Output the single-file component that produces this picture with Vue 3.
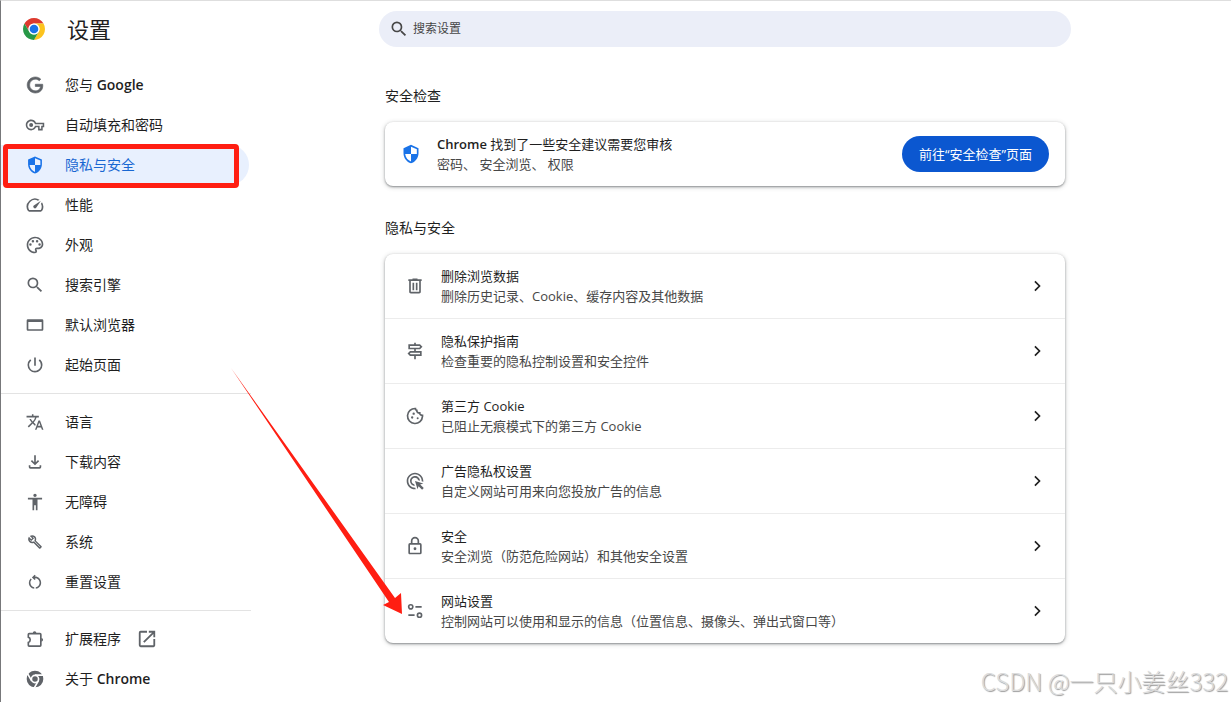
<script setup>
import { ref } from 'vue'

const query = ref('')
const active = ref('privacy')

const searchPath = 'M15.5 14h-.79l-.28-.27A6.471 6.471 0 0 0 16 9.5 6.5 6.5 0 1 0 9.5 16c1.61 0 3.09-.59 4.23-1.57l.27.28v.79l5 4.99L20.49 19l-4.99-5zm-6 0C7.01 14 5 11.99 5 9.5S7.01 5 9.5 5 14 7.01 14 9.5 11.99 14 9.5 14z'
const shieldPath = 'M12 1 3 5v6c0 5.55 3.84 10.74 9 12 5.16-1.26 9-6.45 9-12V5l-9-4zM12 12H5c.53 4.12 3.28 7.79 7 8.94zM12 3.19l7 3.11V12h-7z'

const menu = [
  [
    {
      id: 'google',
      label: '您与 ',
      brand: 'Google',
      box: '-3 -3 30 30',
      bold: true,
      path: 'M12.48 10.92v3.28h7.84c-.24 1.84-.853 3.187-1.787 4.133-1.147 1.147-2.933 2.4-6.053 2.4-4.827 0-8.6-3.893-8.6-8.72s3.773-8.72 8.6-8.72c2.6 0 4.507 1.027 5.907 2.347l2.307-2.307C18.747 1.44 16.133 0 12.48 0 5.867 0 .307 5.387.307 12s5.56 12 12.173 12c3.573 0 6.267-1.173 8.373-3.36 2.16-2.16 2.84-5.213 2.84-7.667 0-.76-.053-1.467-.173-2.053H12.48z'
    },
    {
      id: 'autofill',
      label: '自动填充和密码',
      box: '-1 -1 26 26',
      path: 'M22 19h-6v-4h-2.68c-1.14 2.42-3.6 4-6.32 4-3.86 0-7-3.14-7-7s3.14-7 7-7c2.72 0 5.17 1.58 6.32 4H24v6h-2v4zm-4-2h2v-4h2v-2H11.94l-.23-.67C11.01 8.34 9.11 7 7 7c-2.76 0-5 2.24-5 5s2.24 5 5 5c2.11 0 4.01-1.34 4.71-3.33l.23-.67H18v4zM7 14.6a2.6 2.6 0 1 1 0-5.2 2.6 2.6 0 0 1 0 5.2z'
    },
    { id: 'privacy', label: '隐私与安全', path: shieldPath, box: '-1 -1 26 26' },
    {
      id: 'performance',
      label: '性能',
      path: 'M20.38 8.57l-1.23 1.85a8 8 0 0 1-.22 7.58H5.07A8 8 0 0 1 15.58 6.85l1.85-1.23A10 10 0 0 0 3.35 19a2 2 0 0 0 1.72 1h13.85a2 2 0 0 0 1.74-1 10 10 0 0 0-.27-10.44zM10.59 15.41a2 2 0 0 0 2.83 0l5.66-8.49-8.49 5.66a2 2 0 0 0 0 2.83z'
    },
    {
      id: 'appearance',
      label: '外观',
      path: 'M12 22C6.49 22 2 17.51 2 12S6.49 2 12 2s10 4.04 10 9c0 3.31-2.69 6-6 6h-1.77c-.28 0-.5.22-.5.5 0 .12.05.23.13.33.41.47.64 1.06.64 1.67A2.5 2.5 0 0 1 12 22zm0-18c-4.41 0-8 3.59-8 8s3.59 8 8 8c.28 0 .5-.22.5-.5a.54.54 0 0 0-.14-.35c-.41-.46-.63-1.05-.63-1.65a2.5 2.5 0 0 1 2.5-2.5H16c2.21 0 4-1.79 4-4 0-3.86-3.59-7-8-7zM5 11.5a1.5 1.5 0 1 0 3 0 1.5 1.5 0 1 0-3 0zM8 7.5a1.5 1.5 0 1 0 3 0 1.5 1.5 0 1 0-3 0zM13 7.5a1.5 1.5 0 1 0 3 0 1.5 1.5 0 1 0-3 0zM16 11.5a1.5 1.5 0 1 0 3 0 1.5 1.5 0 1 0-3 0z'
    },
    { id: 'search', label: '搜索引擎', path: searchPath },
    {
      id: 'browser',
      label: '默认浏览器',
      path: 'M3.5 5h17A1.5 1.5 0 0 1 22 6.5v11a1.5 1.5 0 0 1-1.5 1.5h-17A1.5 1.5 0 0 1 2 17.5v-11A1.5 1.5 0 0 1 3.5 5zM4 8.5V17h16V8.5z'
    },
    {
      id: 'startup',
      label: '起始页面',
      path: 'M13 3h-2v10h2V3zm4.83 2.17-1.42 1.42A6.92 6.92 0 0 1 19 12c0 3.87-3.13 7-7 7A6.995 6.995 0 0 1 7.58 6.58L6.17 5.17A8.932 8.932 0 0 0 3 12a9 9 0 0 0 18 0c0-2.74-1.23-5.18-3.17-6.83z'
    }
  ],
  [
    {
      id: 'languages',
      label: '语言',
      box: '-1 -1 26 26',
      path: 'M12.87 15.07l-2.54-2.51.03-.03A17.52 17.52 0 0 0 14.07 6H17V4h-7V2H8v2H1v1.99h11.17C11.5 7.92 10.44 9.75 9 11.35 8.07 10.32 7.3 9.19 6.69 8h-2c.73 1.63 1.73 3.17 2.98 4.56l-5.09 5.02L4 19l5-5 3.11 3.11.76-2.04zM18.5 10h-2L12 22h2l1.12-3h4.75L21 22h2l-4.5-12zm-2.62 7l1.62-4.33L19.12 17h-3.24z'
    },
    {
      id: 'downloads',
      label: '下载内容',
      path: 'M12 16l-5-5 1.4-1.45 2.6 2.6V4h2v8.15l2.6-2.6L17 11zM6.5 20a2 2 0 0 1-2-2v-2h2v2h11v-2h2v2a2 2 0 0 1-2 2z'
    },
    {
      id: 'accessibility',
      label: '无障碍',
      path: 'M12 2c1.1 0 2 .9 2 2s-.9 2-2 2-2-.9-2-2 .9-2 2-2zm8.5 7H15v13h-2v-6h-2v6H9V9H3.5V7h17v2z'
    },
    {
      id: 'system',
      label: '系统',
      box: '-4 -4 32 32',
      path: 'M22.61 18.99l-9.08-9.08c.93-2.34.45-5.1-1.44-7C9.79.61 6.21.4 3.66 2.26L7.5 6.11 6.08 7.52 2.25 3.69C.39 6.23.6 9.82 2.9 12.11c1.86 1.86 4.57 2.35 6.89 1.48l9.11 9.11c.39.39 1.02.39 1.41 0l2.3-2.3c.4-.38.4-1.01 0-1.41zM19.6 20.1l-9.2-9.2c-.61.45-1.09.6-1.8.7-1.36.2-2.6-.1-3.6-1.15C4 9.4 3.5 8.7 3.4 7.8l2.7 2.7 4.4-4.4-2.7-2.7c1.1.1 1.9.5 2.7 1.3 1 1 1.3 2.2 1.1 3.5-.12.71-.4 1.3-.8 1.9l9.4 9.4z'
    },
    {
      id: 'reset',
      label: '重置设置',
      box: '-1 -1 26 26',
      path: 'M6 13c0-1.65.67-3.15 1.76-4.24L6.34 7.34A8.014 8.014 0 0 0 4 13c0 4.08 3.05 7.44 7 7.93v-2.02c-2.83-.48-5-2.94-5-5.91zM20 13c0-4.42-3.58-8-8-8-.06 0-.12.01-.18.01l1.09-1.09L11.5 2.5 8 6l3.5 3.5 1.41-1.41-1.08-1.08c.06 0 .12-.01.17-.01 3.31 0 6 2.69 6 6 0 2.97-2.17 5.43-5 5.91v2.02c3.95-.49 7-3.85 7-7.93z'
    }
  ],
  [
    { id: 'extensions', label: '扩展程序', external: true },
    { id: 'about', label: '关于 ', brand: 'Chrome' }
  ]
]

const rows = [
  {
    title: '删除浏览数据',
    sub: '删除历史记录、Cookie、缓存内容及其他数据',
    path: 'M7 21q-.825 0-1.412-.587Q5 19.825 5 19V6H4V4h5V3h6v1h5v2h-1v13q0 .825-.587 1.413Q17.825 21 17 21zM17 6H7v13h10zM9 17h2V8H9zm4 0h2V8h-2z'
  },
  {
    title: '隐私保护指南',
    sub: '检查重要的隐私控制设置和安全控件',
    path: 'M13 10h5l3-3-3-3h-5V2h-2v2H4v6h7v2H6l-3 3 3 3h5v4h2v-4h7v-6h-7v-2zM6 6h11.17l1 1-1 1H6V6zm12 10H6.83l-1-1 1-1H18v2z'
  },
  {
    title: '第三方 Cookie',
    sub: '已阻止无痕模式下的第三方 Cookie',
    stroke: 'M12.5 3a9 9 0 1 0 8.5 9.5v-1.3c-2.2.1-3.4-1.1-3.3-2.9-2.3.1-3.8-1.2-3.5-3-1.2-.3-1.8-1.2-1.7-2.3z',
    path: 'M9 9.2a1.4 1.4 0 1 0 2.8 0 1.4 1.4 0 1 0-2.8 0zM7.2 13.8a1.4 1.4 0 1 0 2.8 0 1.4 1.4 0 1 0-2.8 0zM14 14.8a1.2 1.2 0 1 0 2.4 0 1.2 1.2 0 1 0-2.4 0z'
  },
  {
    title: '广告隐私权设置',
    sub: '自定义网站可用来向您投放广告的信息',
    path: 'M11.71 17.99A5.993 5.993 0 0 1 6 12c0-3.31 2.69-6 6-6 3.22 0 5.84 2.53 5.99 5.71l-2.1-.63a3.999 3.999 0 1 0-4.81 4.81l.63 2.1zM22 12c0 .3-.01.6-.04.9l-1.97-.59c.01-.1.01-.21.01-.31 0-4.42-3.58-8-8-8s-8 3.58-8 8 3.58 8 8 8c.1 0 .21 0 .31-.01l.59 1.97c-.3.03-.6.04-.9.04-5.52 0-10-4.48-10-10S6.48 2 12 2s10 4.48 10 10zm-3.77 4.26L22 15l-10-3 3 10 1.26-3.77 4.27 4.27 1.98-1.98-4.28-4.26z'
  },
  {
    title: '安全',
    sub: '安全浏览（防范危险网站）和其他安全设置',
    path: 'M18 8.5h-1V6A5 5 0 0 0 7 6v2.5H6a2 2 0 0 0-2 2V20c0 1.1.9 2 2 2h12a2 2 0 0 0 2-2v-9.5a2 2 0 0 0-2-2zM9 6a3 3 0 0 1 6 0v2.5H9V6zm9 14H6v-9.5h12V20zm-6-3a1.7 1.7 0 1 0 0-3.4 1.7 1.7 0 0 0 0 3.4z'
  },
  {
    title: '网站设置',
    sub: '控制网站可以使用和显示的信息（位置信息、摄像头、弹出式窗口等）',
    stroke: 'M4.4 7a2.5 2.5 0 1 0 5 0 2.5 2.5 0 1 0-5 0zM12.5 7H20M4 17h7.5M14.9 17a2.5 2.5 0 1 0 5 0 2.5 2.5 0 1 0-5 0z'
  }
]
</script>

<template>
  <div class="app">
    <aside class="sidebar">
      <header class="brand">
        <svg class="logo" viewBox="0 0 24 24" aria-hidden="true">
          <path fill="#dd3a2e" d="M1.608 6A12 12 0 0 1 22.392 6H12A6 6 0 0 0 6.804 15z" />
          <path fill="#fcc31e" d="M22.392 6A12 12 0 0 1 12 24L17.196 15A6 6 0 0 0 12 6z" />
          <path fill="#279847" d="M12 24A12 12 0 0 1 1.608 6L6.804 15A6 6 0 0 0 17.196 15z" />
          <circle cx="12" cy="12" r="6" fill="#fff" />
          <circle cx="12" cy="12" r="4.7" fill="#1a73e8" />
        </svg>
        <h1>设置</h1>
      </header>

      <nav>
        <div v-for="(group, i) in menu" :key="i" class="menu-group">
          <a
            v-for="item in group"
            :key="item.id"
            :href="'#' + item.id"
            class="menu-item"
            :class="{ active: active === item.id }"
            @click="active = item.id"
          >
            <svg v-if="item.path" class="icon" :class="{ bold: item.bold }" :viewBox="item.box || '0 0 24 24'" aria-hidden="true">
              <path fill-rule="evenodd" :d="item.path" />
            </svg>
            <svg v-else-if="item.id === 'extensions'" class="icon" viewBox="0 0 24 24" aria-hidden="true">
              <path class="line" d="M5 5.5h13a1 1 0 0 1 1 1v13a1 1 0 0 1-1 1H5a1 1 0 0 1-1-1v-3.3c3-.8 3-5.6 0-6.4V6.5a1 1 0 0 1 1-1z" />
              <path d="M9.3 5a2.2 2.2 0 0 1 4.4 0zM19.5 10.8a2.2 2.2 0 0 1 0 4.4z" />
            </svg>
            <svg v-else class="icon" viewBox="0 0 24 24" aria-hidden="true">
              <circle cx="12" cy="12" r="10" />
              <path class="gap" d="M12 7.4h10M15.98 14.3l-5 8.66M8.02 14.3l-5-8.66" />
              <circle cx="12" cy="12" r="4.3" class="gap" />
            </svg>
            <span>{{ item.label }}<b v-if="item.brand">{{ item.brand }}</b></span>
            <svg v-if="item.external" class="icon" viewBox="1 1 22 22" aria-hidden="true">
              <path d="M19 19H5V5h7V3H5a2 2 0 0 0-2 2v14a2 2 0 0 0 2 2h14c1.1 0 2-.9 2-2v-7h-2v7zM14 3v2h3.59l-9.83 9.83 1.41 1.41L19 6.41V10h2V3h-7z" />
            </svg>
            <i v-if="item.id === 'privacy'" class="marker"></i>
          </a>
        </div>
      </nav>
    </aside>

    <main>
      <label class="search">
        <svg class="icon" viewBox="0 0 24 24" aria-hidden="true">
          <path :d="searchPath" />
        </svg>
        <input v-model="query" type="text" placeholder="搜索设置" aria-label="搜索设置" />
      </label>

      <section>
        <h2>安全检查</h2>
        <div class="card check">
          <svg class="icon" viewBox="0 0 24 24" aria-hidden="true">
            <path fill-rule="evenodd" :d="shieldPath" />
          </svg>
          <div class="text">
            <div class="title"><b>Chrome</b> 找到了一些安全建议需要您审核</div>
            <div class="sub">密码、 安全浏览、 权限</div>
          </div>
          <button type="button" class="primary">前往“安全检查”页面</button>
        </div>
      </section>

      <section>
        <h2>隐私与安全</h2>
        <div class="card">
          <button v-for="row in rows" :key="row.title" type="button" class="row">
            <svg class="icon" viewBox="0 0 24 24" aria-hidden="true">
              <path v-if="row.stroke" class="line" :d="row.stroke" />
              <path v-if="row.path" fill-rule="evenodd" :d="row.path" />
            </svg>
            <span class="text">
              <span class="title">{{ row.title }}</span>
              <span class="sub">{{ row.sub }}</span>
            </span>
            <svg class="icon chevron" viewBox="0 0 24 24" aria-hidden="true">
              <path class="line" d="M9.5 6.5 15 12l-5.5 5.5" />
            </svg>
          </button>
        </div>
      </section>
    </main>

    <svg class="arrow" viewBox="0 0 172 248" aria-hidden="true">
      <path d="M1 2 165 232 171 227 172 248 153 239 159 236z" />
    </svg>
    <div class="watermark">CSDN @一只小姜丝332</div>
  </div>
</template>

<style>
body {
  margin: 0;
  background: #fff;
}
</style>

<style scoped>
.app {
  position: relative;
  display: flex;
  box-sizing: border-box;
  min-height: 100vh;
  border-top: 1px solid #dedede;
  border-left: 1px solid #77787a;
  color: #1f1f1f;
  font-family: "Open Sans", "Noto Sans CJK SC", sans-serif;
  font-size: 13px;
  line-height: 20px;
}

b {
  font-weight: 600;
}

.sidebar {
  flex: none;
  width: 250px;
}

.brand {
  display: flex;
  align-items: center;
  gap: 22px;
  height: 56px;
  margin-bottom: 8px;
  padding-left: 22px;
}

.logo {
  width: 22px;
  height: 22px;
}

h1 {
  margin: 0;
  font-size: 22px;
  font-weight: 400;
  line-height: 32px;
}

.menu-group + .menu-group {
  margin-top: 8px;
  padding-top: 8px;
  border-top: 1px solid #e3e3e3;
}

.menu-item {
  position: relative;
  display: flex;
  align-items: center;
  gap: 20px;
  height: 40px;
  margin-right: 2px;
  padding-left: 24px;
  border-radius: 0 20px 20px 0;
  color: #1f1f1f;
  font-size: 14px;
  text-decoration: none;
}

.menu-item span + .icon {
  margin-left: -4px;
}

.menu-item.active {
  background: #e8f0fe;
  color: #1967d2;
}

.menu-item.active .icon {
  fill: #1a73e8;
}

.icon {
  flex: none;
  width: 20px;
  height: 20px;
  fill: #5f6368;
}

.icon.bold path {
  stroke: #5f6368;
  stroke-width: 1;
}

.icon .line {
  fill: none;
  stroke: #5f6368;
  stroke-width: 2;
}

.icon .gap {
  stroke: #fff;
  stroke-width: 2;
}

/* red frame drawn over the selected entry */
.marker {
  position: absolute;
  inset: -1px 10px -3px 2px;
  border: 5px solid #ff1e12;
  border-radius: 4px;
}

main {
  flex: 1;
  padding: 10px 160px 24px 128px;
}

.search {
  display: flex;
  align-items: center;
  gap: 4px;
  height: 36px;
  padding: 0 18px 0 10px;
  border-radius: 18px;
  background: #ebeef8;
}

.search .icon {
  fill: #474747;
}

.search input {
  flex: 1;
  min-width: 0;
  padding: 0;
  border: 0;
  outline: 0;
  background: none;
  color: #1f1f1f;
  font: inherit;
  font-size: 12px;
}

.search input::placeholder {
  color: #474747;
  opacity: 1;
}

section {
  padding: 0 6px;
  margin-top: 32px;
}

.search + section {
  margin-top: 39px;
}

h2 {
  margin: 0 0 16px;
  font-size: 14px;
  font-weight: 400;
  line-height: 20px;
}

.card {
  border-radius: 8px;
  background: #fff;
  box-shadow: 0 1px 2px rgba(60, 64, 67, 0.5), 0 1px 4px 1px rgba(60, 64, 67, 0.18);
}

.check {
  display: flex;
  align-items: center;
  gap: 16px;
  padding: 12px 16px;
}

.check .icon {
  fill: #1a73e8;
}

.text {
  flex: 1;
  min-width: 0;
}

.title,
.sub {
  display: block;
}

.sub {
  color: #474747;
}

.primary {
  height: 36px;
  padding: 0 17px;
  border: 0;
  border-radius: 18px;
  background: #0b57d0;
  color: #fff;
  font: inherit;
  cursor: pointer;
}

.row {
  display: flex;
  align-items: center;
  gap: 16px;
  width: 100%;
  padding: 12px 18px 12px 20px;
  border: 0;
  background: none;
  color: #1f1f1f;
  font: inherit;
  text-align: left;
  cursor: pointer;
}

.row + .row {
  border-top: 1px solid #ececec;
}

.chevron .line {
  stroke: #1f1f1f;
}

.arrow {
  position: absolute;
  top: 365px;
  left: 229px;
  width: 172px;
  height: 248px;
  fill: #ff1e12;
  pointer-events: none;
}

.watermark {
  position: absolute;
  right: 3px;
  bottom: 3px;
  color: #dcdcdc;
  font-family: "Noto Sans CJK SC", sans-serif;
  font-size: 24px;
  font-weight: 300;
  line-height: 36px;
  text-shadow: 1px 1px 1px #999;
  pointer-events: none;
}
</style>
